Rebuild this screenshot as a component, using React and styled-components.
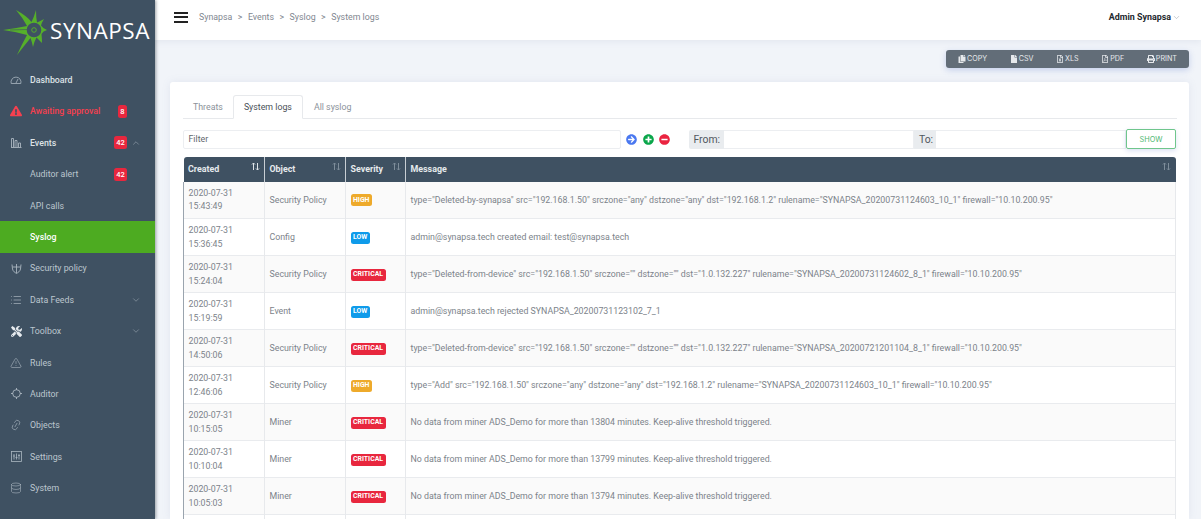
import React from 'react'
import styled, { createGlobalStyle } from 'styled-components'
import { ChevronDown, ChevronUp, Database, Link2, List, TriangleAlert } from 'lucide-react'
import {
  FaArrowCircleRight,
  FaCopy,
  FaExclamationTriangle,
  FaFile,
  FaMinusCircle,
  FaPlusCircle,
  FaPrint,
  FaRegFileExcel,
  FaRegFilePdf,
  FaTools,
} from 'react-icons/fa'

const GlobalStyle = createGlobalStyle`
  html, body {
    margin: 0;
    height: 100%;
    overflow: hidden;
    background: #f1f4f9;
    font-family: Roboto, "Liberation Sans", sans-serif;
  }
  * { box-sizing: border-box; }
`

const Page = styled.div`
  display: flex;
  height: 519px;
  overflow: hidden;
`

const Sidebar = styled.aside`
  width: 155px;
  flex-shrink: 0;
  background: #3f5162;
  box-shadow: 1px 0 3px rgba(40, 50, 60, 0.45);
  z-index: 2;
`

const Brand = styled.div`
  height: 64.4px;
  display: flex;
  align-items: flex-start;
  padding-top: 5px;
  color: #fff;
`

const BrandName = styled.span`
  font-family: "Open Sans", sans-serif;
  font-size: 22.5px;
  line-height: 24px;
  font-weight: 400;
  margin: 14px 0 0 0;
  letter-spacing: 0.55px;
`

const NavSlot = styled.div`
  position: relative;
  display: flex;
  align-items: center;
`

const NavItem = styled.div`
  width: 100%;
  height: 31.4px;
  display: flex;
  align-items: center;
  padding-left: ${(p) => (p.$sub ? '30px' : '10px')};
  font-size: 8.8px;
  font-weight: ${(p) => (p.$strong || p.$alert || p.$active ? 500 : 400)};
  color: ${(p) => {
    if (p.$alert) return '#f5404f'
    if (p.$active) return '#fff'
    if (p.$strong) return '#dde2e6'
    return '#bcc6ce'
  }};
  background: ${(p) => (p.$active ? '#4dab21' : 'transparent')};
`

const NavIcon = styled.span`
  width: 12px;
  margin-right: 8px;
  display: flex;
  justify-content: center;
  color: ${(p) => {
    if (p.$alert) return '#f5404f'
    if (p.$bright) return '#e6eaee'
    return '#aab6c0'
  }};
`

const NavLabel = styled.span`
  flex: 1;
`

const NavBadge = styled.span`
  position: absolute;
  right: 28px;
  height: 13px;
  min-width: ${(p) => (p.$small ? '9px' : '13px')};
  padding: 0 1.5px;
  border-radius: 2.5px;
  background: #e8273e;
  color: #fff;
  font-size: 7.5px;
  font-weight: 500;
  display: flex;
  align-items: center;
  justify-content: center;
`

const NavCaret = styled.span`
  position: absolute;
  right: 14px;
  display: flex;
  color: #a3afba;
`

const Main = styled.main`
  flex: 1;
  min-width: 0;
  display: flex;
  flex-direction: column;
`

const TopBar = styled.header`
  height: 40px;
  flex-shrink: 0;
  background: #fff;
  box-shadow: 0 2px 6px rgba(120, 130, 160, 0.1);
  display: flex;
  align-items: center;
  padding: 0 20px 6px 19px;
`

const Burger = styled.div`
  width: 14px;
  height: 11px;
  border-top: 2px solid #222;
  border-bottom: 2px solid #222;
  position: relative;
  margin-right: 11px;
  &::after {
    content: '';
    position: absolute;
    left: 0;
    right: 0;
    top: 2.5px;
    height: 2px;
    background: #222;
  }
`

const Crumbs = styled.nav`
  flex: 1;
  display: flex;
  gap: 5.5px;
  font-size: 8.8px;
  color: #7f8790;
`

const UserName = styled.div`
  display: flex;
  align-items: center;
  gap: 1px;
  font-size: 8.9px;
  font-weight: 700;
  color: #23282d;
  svg { color: #8a919a; }
`

const Content = styled.div`
  flex: 1;
  min-height: 0;
  padding: 10px 12px 0 15px;
  display: flex;
  flex-direction: column;
`

const ExportRow = styled.div`
  display: flex;
  justify-content: flex-end;
  margin-bottom: 14.5px;
`

const ExportGroup = styled.div`
  width: 243px;
  height: 17.5px;
  background: #626d78;
  border-radius: 3px;
  box-shadow: 0 2px 6px rgba(80, 110, 200, 0.28);
  display: flex;
  align-items: center;
  justify-content: space-between;
  padding: 0 12px;
`

const ExportButton = styled.span`
  display: flex;
  align-items: center;
  gap: 1px;
  font-family: Inter, sans-serif;
  font-size: 7.2px;
  color: #e6e9ec;
`

const Card = styled.section`
  flex: 1;
  background: #fff;
  border-radius: 3px 3px 0 0;
  padding: 13px 12.5px 0 13px;
  box-shadow: 0 0 8px rgba(120, 130, 170, 0.12);
  overflow: hidden;
`

const Tabs = styled.div`
  display: flex;
  height: 24px;
  border-bottom: 1px solid #e7e9ec;
  margin-bottom: 10px;
`

const Tab = styled.div`
  height: 24px;
  padding: 0 ${(p) => p.$pad}px 1px;
  display: flex;
  align-items: center;
  font-size: 8.8px;
  color: ${(p) => (p.$active ? '#4a5158' : '#8b929a')};
  ${(p) =>
    p.$active &&
    `
    background: #fff;
    border: 1px solid #e7e9ec;
    border-bottom-color: #fff;
    border-radius: 3px 3px 0 0;
  `}
`

const FilterRow = styled.div`
  display: flex;
  align-items: center;
  height: 20px;
  margin-bottom: 8px;
`

const FilterInput = styled.div`
  width: 438px;
  flex-shrink: 0;
  height: 19px;
  border: 1px solid #eceef1;
  border-radius: 2px;
  padding-left: 4.5px;
  display: flex;
  align-items: center;
  font-size: 8.8px;
  color: #5f666d;
`

const RoundActions = styled.div`
  display: flex;
  flex-shrink: 0;
  gap: 5.5px;
  margin: 0 18.5px 0 5px;
`

const RangeLabel = styled.div`
  width: ${(p) => p.$width}px;
  flex-shrink: 0;
  height: 19px;
  padding-left: 5px;
  background: #e9ecef;
  border-radius: ${(p) => (p.$first ? '2px 0 0 2px' : '0')};
  display: flex;
  align-items: center;
  font-size: 10.4px;
  color: #50575e;
`

const RangeInput = styled.div`
  width: ${(p) => p.$width}px;
  flex-shrink: 0;
  height: 19px;
  border: 1px solid #eceef1;
  border-left: 0;
`

const ShowButton = styled.button`
  width: 50px;
  flex-shrink: 0;
  height: 19.5px;
  padding: 0;
  background: #fff;
  border: 1px solid #6fc68c;
  border-radius: 2px;
  box-shadow: 0 2px 5px rgba(80, 110, 200, 0.2);
  color: #4cb872;
  font-family: Inter, sans-serif;
  font-size: 7.3px;
`

const Table = styled.table`
  width: 993px;
  border-collapse: collapse;
  table-layout: fixed;
  font-size: 8.8px;
  color: #7c838a;
`

const HeadCell = styled.th`
  position: relative;
  height: 24.5px;
  padding: 0 0 0 4.5px;
  background: #3f5162;
  color: #e6eaed;
  font-size: 8.9px;
  font-weight: 700;
  text-align: left;
  border-right: 1px solid #c8ced4;
  &:first-child { border-radius: 3px 0 0 0; }
  &:last-child { border-radius: 0 3px 0 0; border-right: 0; }
`

const SortIcon = styled.span`
  position: absolute;
  top: 5px;
  right: 4.5px;
  color: ${(p) => (p.$on ? '#dfe4e8' : '#7e8d9a')};
  display: flex;
`

const Row = styled.tr`
  height: 37px;
  background: ${(p) => (p.$odd ? '#fafafa' : '#fff')};
  border-bottom: 1px solid #e9ebee;
`

const Cell = styled.td`
  padding: 1px 4.5px 0;
  line-height: 13.3px;
  border-right: 1px solid #e7e9ec;
  white-space: ${(p) => (p.$nowrap ? 'nowrap' : 'normal')};
  &:first-child { border-left: 1px solid #9aa4ae; }
`

const severityColors = { HIGH: '#eeaa2b', LOW: '#0f9bea', CRITICAL: '#e8273e' }

const SeverityBadge = styled.span`
  display: inline-flex;
  align-items: center;
  vertical-align: middle;
  height: 12px;
  padding: 0 2.5px;
  border-radius: 2.5px;
  background: ${(p) => severityColors[p.$level]};
  color: #fff;
  font-size: 6.9px;
  font-weight: 700;
`

// the starburst mark of the logo
const LogoMark = () => (
  <svg width="50" height="55" viewBox="0 0 50 55">
    <path
      fill="#56b02a"
      fillRule="evenodd"
      d="M16 5 Q27 11 31.5 17 Q34 12 36 5 Q36 12 37 17.5 Q40 16 44 14 Q41.5 18 41 20.5 Q43 23.5 47 25 Q43 26 41.5 29 Q42 34 42 38 Q38.5 34.5 36.5 32.5 Q34 37 33 42 Q32 37 30.5 33 Q24 41 17 50 Q22 39 27 30 Q15 26.5 3 25 Q15 23.5 27 21 Q23 13 16 5 Z M34 17.7 A7.3 7.3 0 1 0 34 32.3 A7.3 7.3 0 1 0 34 17.7 Z"
    />
    <path d="M10 25 Q20 24.7 27 24.5" stroke="#3f5162" strokeWidth="0.6" fill="none" />
    <circle cx="34" cy="25" r="2.3" fill="none" stroke="#56b02a" strokeWidth="0.9" />
  </svg>
)

const DashIcon = () => (
  <svg width="12" height="9" viewBox="0 0 12 9" fill="none" stroke="currentColor" strokeWidth="0.8">
    <path d="M1.2 7.5 A5 5 0 1 1 10.8 7.5 Z" />
    <path d="M6 7 L8 3" />
  </svg>
)

const BarsIcon = () => (
  <svg width="12" height="11" viewBox="0 0 12 11" fill="none" stroke="currentColor" strokeWidth="0.9">
    <path d="M1 10.5 H11.5" />
    <path d="M1.5 10 V1.5 H3.5 V10 M5 10 V3.5 H7 V10 M8.5 10 V6 H10.5 V10" />
  </svg>
)

const ShieldIcon = () => (
  <svg width="11" height="11" viewBox="0 0 11 11" fill="none" stroke="currentColor" strokeWidth="0.9">
    <path d="M1 1.5 L1.5 6 C2 8.5 4 9.5 5.5 10.5 C7 9.5 9 8.5 9.5 6 L10 1.5" />
    <path d="M5.5 1 V10 M1.5 4 H9.5" />
  </svg>
)

const TargetIcon = () => (
  <svg width="11" height="11" viewBox="0 0 11 11" fill="none" stroke="currentColor" strokeWidth="0.9">
    <circle cx="5.5" cy="5.5" r="3.8" />
    <path d="M5.5 0 V2 M5.5 9 V11 M0 5.5 H2 M9 5.5 H11" />
  </svg>
)

const SlidersIcon = () => (
  <svg width="11" height="11" viewBox="0 0 11 11" fill="none" stroke="currentColor" strokeWidth="0.8">
    <rect x="0.5" y="0.5" width="10" height="10" />
    <path d="M3 3 V8.5 M5.5 2.5 V8.5 M8 3 V8.5 M2 5 H4 M4.5 6.5 H6.5 M7 4.5 H9" />
  </svg>
)

const SortArrows = () => (
  <svg width="9" height="9" viewBox="0 0 9 9" fill="none" stroke="currentColor" strokeWidth="1">
    <path d="M2.5 8 V1 M1 2.5 L2.5 1 L4 2.5 M6.5 1 V8 M5 6.5 L6.5 8 L8 6.5" />
  </svg>
)

const navItems = [
  { label: 'Dashboard', icon: <DashIcon />, strong: true },
  { label: 'Awaiting approval', icon: <FaExclamationTriangle size={12} />, alert: true, badge: '8', small: true },
  { label: 'Events', icon: <BarsIcon />, strong: true, badge: '42', caret: 'up' },
  { label: 'Auditor alert', sub: true, badge: '42' },
  { label: 'API calls', sub: true },
  { label: 'Syslog', sub: true, active: true },
  { label: 'Security policy', icon: <ShieldIcon /> },
  { label: 'Data Feeds', icon: <List size={12} strokeWidth={1.4} />, caret: 'down' },
  { label: 'Toolbox', icon: <FaTools size={11} />, caret: 'down', bright: true },
  { label: 'Rules', icon: <TriangleAlert size={12} strokeWidth={1.2} /> },
  { label: 'Auditor', icon: <TargetIcon /> },
  { label: 'Objects', icon: <Link2 size={12} strokeWidth={1.2} style={{ transform: 'rotate(-60deg)' }} /> },
  { label: 'Settings', icon: <SlidersIcon /> },
  { label: 'System', icon: <Database size={12} strokeWidth={1.2} /> },
]

const exportsList = [
  { label: 'COPY', icon: <FaCopy size={8} /> },
  { label: 'CSV', icon: <FaFile size={8} /> },
  { label: 'XLS', icon: <FaRegFileExcel size={8} /> },
  { label: 'PDF', icon: <FaRegFilePdf size={8} /> },
  { label: 'PRINT', icon: <FaPrint size={8} /> },
]

const rows = [
  ['2020-07-31', '15:43:49', 'Security Policy', 'HIGH', 'type="Deleted-by-synapsa" src="192.168.1.50" srczone="any" dstzone="any" dst="192.168.1.2" rulename="SYNAPSA_20200731124603_10_1" firewall="10.10.200.95"'],
  ['2020-07-31', '15:36:45', 'Config', 'LOW', 'admin@synapsa.tech created email: test@synapsa.tech'],
  ['2020-07-31', '15:24:04', 'Security Policy', 'CRITICAL', 'type="Deleted-from-device" src="192.168.1.50" srczone="" dstzone="" dst="1.0.132.227" rulename="SYNAPSA_20200731124602_8_1" firewall="10.10.200.95"'],
  ['2020-07-31', '15:19:59', 'Event', 'LOW', 'admin@synapsa.tech rejected SYNAPSA_20200731123102_7_1'],
  ['2020-07-31', '14:50:06', 'Security Policy', 'CRITICAL', 'type="Deleted-from-device" src="192.168.1.50" srczone="" dstzone="" dst="1.0.132.227" rulename="SYNAPSA_20200721201104_8_1" firewall="10.10.200.95"'],
  ['2020-07-31', '12:46:06', 'Security Policy', 'HIGH', 'type="Add" src="192.168.1.50" srczone="any" dstzone="any" dst="192.168.1.2" rulename="SYNAPSA_20200731124603_10_1" firewall="10.10.200.95"'],
  ['2020-07-31', '10:15:05', 'Miner', 'CRITICAL', 'No data from miner ADS_Demo for more than 13804 minutes. Keep-alive threshold triggered.'],
  ['2020-07-31', '10:10:04', 'Miner', 'CRITICAL', 'No data from miner ADS_Demo for more than 13799 minutes. Keep-alive threshold triggered.'],
  ['2020-07-31', '10:05:03', 'Miner', 'CRITICAL', 'No data from miner ADS_Demo for more than 13794 minutes. Keep-alive threshold triggered.'],
]

const App = () => {
  return (
    <>
      <GlobalStyle />
      <Page>
        <Sidebar>
          <Brand>
            <LogoMark />
            <BrandName>SYNAPSA</BrandName>
          </Brand>
          {navItems.map((item) => (
            <NavSlot key={item.label}>
              <NavItem $sub={item.sub} $active={item.active} $alert={item.alert} $strong={item.strong}>
                {item.icon && (
                  <NavIcon $alert={item.alert} $bright={item.bright}>
                    {item.icon}
                  </NavIcon>
                )}
                <NavLabel>{item.label}</NavLabel>
              </NavItem>
              {item.badge && <NavBadge $small={item.small}>{item.badge}</NavBadge>}
              {item.caret && (
                <NavCaret>
                  {item.caret === 'up' ? (
                    <ChevronUp size={10} strokeWidth={1.3} />
                  ) : (
                    <ChevronDown size={10} strokeWidth={1.3} />
                  )}
                </NavCaret>
              )}
            </NavSlot>
          ))}
        </Sidebar>
        <Main>
          <TopBar>
            <Burger />
            <Crumbs>
              <span>Synapsa</span>
              <span>&gt;</span>
              <span>Events</span>
              <span>&gt;</span>
              <span>Syslog</span>
              <span>&gt;</span>
              <span>System logs</span>
            </Crumbs>
            <UserName>
              Admin Synapsa
              <ChevronDown size={9} strokeWidth={1.2} />
            </UserName>
          </TopBar>
          <Content>
            <ExportRow>
              <ExportGroup>
                {exportsList.map((btn) => (
                  <ExportButton key={btn.label}>
                    {btn.icon}
                    {btn.label}
                  </ExportButton>
                ))}
              </ExportGroup>
            </ExportRow>
            <Card>
              <Tabs>
                <Tab $pad={10}>Threats</Tab>
                <Tab $pad={10} $active>
                  System logs
                </Tab>
                <Tab $pad={11}>All syslog</Tab>
              </Tabs>
              <FilterRow>
                <FilterInput>Filter</FilterInput>
                <RoundActions>
                  <FaArrowCircleRight size={11} color="#4a78f0" />
                  <FaPlusCircle size={11} color="#0aa64a" />
                  <FaMinusCircle size={11} color="#ea2340" />
                </RoundActions>
                <RangeLabel $first $width={35}>
                  From:
                </RangeLabel>
                <RangeInput $width={190.5} />
                <RangeLabel $width={22}>To:</RangeLabel>
                <RangeInput $width={190} />
                <ShowButton>SHOW</ShowButton>
              </FilterRow>
              <Table>
                <colgroup>
                  <col style={{ width: 81 }} />
                  <col style={{ width: 81 }} />
                  <col style={{ width: 60 }} />
                  <col />
                </colgroup>
                <thead>
                  <tr>
                    <HeadCell>
                      Created
                      <SortIcon $on>
                        <SortArrows />
                      </SortIcon>
                    </HeadCell>
                    <HeadCell>
                      Object
                      <SortIcon>
                        <SortArrows />
                      </SortIcon>
                    </HeadCell>
                    <HeadCell>
                      Severity
                      <SortIcon>
                        <SortArrows />
                      </SortIcon>
                    </HeadCell>
                    <HeadCell>
                      Message
                      <SortIcon>
                        <SortArrows />
                      </SortIcon>
                    </HeadCell>
                  </tr>
                </thead>
                <tbody>
                  {rows.map((row, i) => (
                    <Row key={row[1]} $odd={i % 2 === 0}>
                      <Cell>
                        {row[0]}
                        <br />
                        {row[1]}
                      </Cell>
                      <Cell>{row[2]}</Cell>
                      <Cell>
                        <SeverityBadge $level={row[3]}>{row[3]}</SeverityBadge>
                      </Cell>
                      <Cell $nowrap>{row[4]}</Cell>
                    </Row>
                  ))}
                  {/* next row is only just in view, its text is below the fold */}
                  <Row $odd={false}>
                    <Cell />
                    <Cell />
                    <Cell />
                    <Cell />
                  </Row>
                </tbody>
              </Table>
            </Card>
          </Content>
        </Main>
      </Page>
    </>
  )
}

export default App
